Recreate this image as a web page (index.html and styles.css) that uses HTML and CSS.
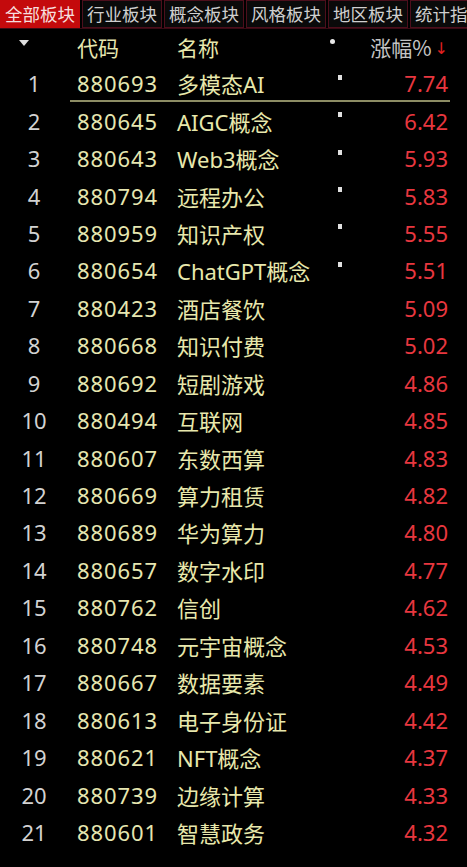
FILE: index.html
```html
<!DOCTYPE html>
<html lang="zh">
<head>
<meta charset="utf-8">
<title>板块</title>
<link rel="stylesheet" href="styles.css">
</head>
<body>
<div class="tabs">
  <div class="tab active">全部板块</div>
  <div class="tab">行业板块</div>
  <div class="tab">概念板块</div>
  <div class="tab">风格板块</div>
  <div class="tab">地区板块</div>
  <div class="tab">统计指标</div>
</div>
<div class="head">
  <div class="c-idx"><span class="tri"></span></div>
  <div class="c-code">代码</div>
  <div class="c-name">名称</div>
  <div class="c-dot"><span class="round"></span></div>
  <div class="c-val">涨幅%<span class="arrow">↓</span></div>
</div>
<div class="list">
  <div class="row sel"><div class="c-idx">1</div><div class="c-code">880693</div><div class="c-name">多模态AI</div><div class="c-dot"><span class="sq"></span></div><div class="c-val">7.74</div></div>
  <div class="row"><div class="c-idx">2</div><div class="c-code">880645</div><div class="c-name">AIGC概念</div><div class="c-dot"><span class="sq"></span></div><div class="c-val">6.42</div></div>
  <div class="row"><div class="c-idx">3</div><div class="c-code">880643</div><div class="c-name">Web3概念</div><div class="c-dot"><span class="sq"></span></div><div class="c-val">5.93</div></div>
  <div class="row"><div class="c-idx">4</div><div class="c-code">880794</div><div class="c-name">远程办公</div><div class="c-dot"><span class="sq"></span></div><div class="c-val">5.83</div></div>
  <div class="row"><div class="c-idx">5</div><div class="c-code">880959</div><div class="c-name">知识产权</div><div class="c-dot"><span class="sq"></span></div><div class="c-val">5.55</div></div>
  <div class="row"><div class="c-idx">6</div><div class="c-code">880654</div><div class="c-name">ChatGPT概念</div><div class="c-dot"><span class="sq"></span></div><div class="c-val">5.51</div></div>
  <div class="row"><div class="c-idx">7</div><div class="c-code">880423</div><div class="c-name">酒店餐饮</div><div class="c-dot"></div><div class="c-val">5.09</div></div>
  <div class="row"><div class="c-idx">8</div><div class="c-code">880668</div><div class="c-name">知识付费</div><div class="c-dot"></div><div class="c-val">5.02</div></div>
  <div class="row"><div class="c-idx">9</div><div class="c-code">880692</div><div class="c-name">短剧游戏</div><div class="c-dot"></div><div class="c-val">4.86</div></div>
  <div class="row"><div class="c-idx">10</div><div class="c-code">880494</div><div class="c-name">互联网</div><div class="c-dot"></div><div class="c-val">4.85</div></div>
  <div class="row"><div class="c-idx">11</div><div class="c-code">880607</div><div class="c-name">东数西算</div><div class="c-dot"></div><div class="c-val">4.83</div></div>
  <div class="row"><div class="c-idx">12</div><div class="c-code">880669</div><div class="c-name">算力租赁</div><div class="c-dot"></div><div class="c-val">4.82</div></div>
  <div class="row"><div class="c-idx">13</div><div class="c-code">880689</div><div class="c-name">华为算力</div><div class="c-dot"></div><div class="c-val">4.80</div></div>
  <div class="row"><div class="c-idx">14</div><div class="c-code">880657</div><div class="c-name">数字水印</div><div class="c-dot"></div><div class="c-val">4.77</div></div>
  <div class="row"><div class="c-idx">15</div><div class="c-code">880762</div><div class="c-name">信创</div><div class="c-dot"></div><div class="c-val">4.62</div></div>
  <div class="row"><div class="c-idx">16</div><div class="c-code">880748</div><div class="c-name">元宇宙概念</div><div class="c-dot"></div><div class="c-val">4.53</div></div>
  <div class="row"><div class="c-idx">17</div><div class="c-code">880667</div><div class="c-name">数据要素</div><div class="c-dot"></div><div class="c-val">4.49</div></div>
  <div class="row"><div class="c-idx">18</div><div class="c-code">880613</div><div class="c-name">电子身份证</div><div class="c-dot"></div><div class="c-val">4.42</div></div>
  <div class="row"><div class="c-idx">19</div><div class="c-code">880621</div><div class="c-name">NFT概念</div><div class="c-dot"></div><div class="c-val">4.37</div></div>
  <div class="row"><div class="c-idx">20</div><div class="c-code">880739</div><div class="c-name">边缘计算</div><div class="c-dot"></div><div class="c-val">4.33</div></div>
  <div class="row"><div class="c-idx">21</div><div class="c-code">880601</div><div class="c-name">智慧政务</div><div class="c-dot"></div><div class="c-val">4.32</div></div>
</div>
</body>
</html>
```

FILE: styles.css
```css
html, body {
  margin: 0;
  padding: 0;
  background: #000;
  overflow: hidden;
}
body {
  width: 467px;
  height: 867px;
  font-family: "Noto Sans", "Noto Sans CJK SC", sans-serif;
}
.tabs {
  display: flex;
  height: 28px;
  gap: 2px;
  border-bottom: 1px solid #3a0a14;
  overflow: hidden;
  white-space: nowrap;
}
.tab {
  flex: 0 0 auto;
  width: 80px;
  box-sizing: border-box;
  height: 28px;
  line-height: 26px;
  font-size: 17.5px;
  text-align: center;
  color: #cfcfcf;
  background: #0a0a0a;
  border: 1px solid #4c0f1c;
  font-family: "Noto Sans CJK SC", sans-serif;
  overflow: hidden;
}
.tab:last-child {
  text-align: left;
  padding-left: 4px;
}
.tab.active {
  background: #c40a0c;
  color: #f6dede;
  border-color: #c40a0c;
}
.head, .row {
  display: grid;
  grid-template-columns: 68px 109px 153px 20px 1fr;
  align-items: center;
  padding-right: 19px;
}
.head {
  height: 35.5px;
  font-size: 21px;
  color: #c4c4c4;
  font-family: "Noto Sans CJK SC", sans-serif;
}
.c-idx {
  text-align: center;
  color: #d2d2d2;
  display: flex;
  justify-content: center;
  align-items: center;
}
.c-code { padding-left: 9px; color: #e6e6b0; }
.c-name { color: #e8e8ac; white-space: nowrap; }
.c-dot { display: flex; justify-content: center; align-items: center; }
.c-val { text-align: right; color: #e8373f; white-space: nowrap; }
.head .c-val { color: #c4c4c4; }
.head .c-dot { justify-content: flex-start; }
.arrow {
  color: #e02020;
  font-size: 16px;
  margin-left: 3px;
  font-family: "DejaVu Sans", sans-serif;
  position: relative;
  top: -2px;
}
.tri {
  width: 0;
  height: 0;
  border-left: 5px solid transparent;
  border-right: 5px solid transparent;
  border-top: 6px solid #e0e0e0;
  margin-left: -20px;
  margin-top: -8px;
}
.round {
  width: 5px;
  height: 5px;
  border-radius: 50%;
  background: #e8e8e8;
  margin-top: -10px;
  margin-left: 0;
}
.row {
  height: 37.45px;
  font-size: 22px;
  position: relative;
}
.row .c-code { letter-spacing: 0.9px; }
.sq {
  width: 4px;
  height: 5px;
  background: #e0e0e0;
  margin-top: -12px;
}
.row.sel::after {
  content: "";
  position: absolute;
  left: 70px;
  right: 17px;
  bottom: 0;
  height: 2px;
  background: #8c8c64;
}
```
